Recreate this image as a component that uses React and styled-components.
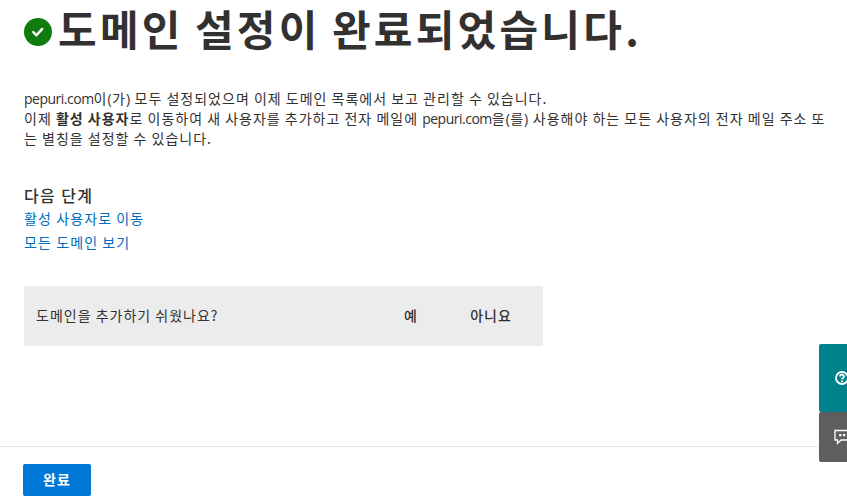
import styled, { createGlobalStyle } from "styled-components";

const Colors = {
  text: "#323130",
  link: "#006cbe",
  green: "#107c10",
  blue: "#0078d7",
  teal: "#00828c",
  gray: "#605e5c",
  panel: "#ececec",
  border: "#e5e5e5",
};

export default function App() {
  return (
    <>
      <GlobalStyle />
      <Page>
        <Content>
          <Header>
            <StatusIcon viewBox="0 0 28 28">
              <circle cx="14" cy="14" r="14" fill={Colors.green} />
              <path d="M9.3 14.2l3.2 3.1 5.7-6.4" />
            </StatusIcon>
            <Title>도메인 설정이 완료되었습니다.</Title>
          </Header>
          <Description>
            <Line>
              <Latin>pepuri.com</Latin>이<Paren>(</Paren>가<Paren>)</Paren> 모두 설정되었으며 이제 도메인 목록에서 보고 관리할 수 있습니다.
            </Line>
            <Line>
              이제 <b>활성 사용자</b>로 이동하여 새 사용자를 추가하고 전자 메일에{" "}
              <Latin>pepuri.com</Latin>을<Paren>(</Paren>를<Paren>)</Paren> 사용해야 하는 모든 사용자의 전자 메일 주소 또
            </Line>
            <Line>는 별칭을 설정할 수 있습니다.</Line>
          </Description>
          <NextSteps>
            <Subtitle>다음 단계</Subtitle>
            <StepLink href="#">활성 사용자로 이동</StepLink>
            <StepLink href="#">모든 도메인 보기</StepLink>
          </NextSteps>
          <Survey>
            <Question>도메인을 추가하기 쉬웠나요?</Question>
            <Answer $width={66}>예</Answer>
            <Answer $width={94}>아니요</Answer>
          </Survey>
        </Content>
        <Footer>
          <DoneButton>완료</DoneButton>
        </Footer>
        <SideButtons>
          <SideButton $color={Colors.teal} $height={68}>
            <svg width="15" height="14" viewBox="-1 0 15 14">
              <circle cx="7" cy="7" r="6" strokeWidth="1.8" />
              <path d="M5 5.6c0-2.6 4-2.6 4-.1 0 1.4-2 1.5-2 2.9M7 9.5v1.5" strokeWidth="1.8" />
            </svg>
          </SideButton>
          <SideButton $color={Colors.gray} $height={50}>
            <svg width="18" height="16" viewBox="0 0 18 16">
              <path d="M1 1.5h16v9.5H7l-3.5 3.5v-3.5H1z" strokeWidth="1.3" />
              <path d="M5.2 6.2h2.2M9 6.2h2.2M12.8 6.2h2.2" strokeWidth="2.3" />
            </svg>
          </SideButton>
        </SideButtons>
      </Page>
    </>
  );
}

const GlobalStyle = createGlobalStyle`
  * {
    box-sizing: border-box;
  }
  body {
    margin: 0;
    background: #fff;
    color: ${Colors.text};
    font-family: "Noto Sans CJK KR", sans-serif;
    font-size: 14px;
    letter-spacing: 1px;
  }
`;

const Page = styled.div`
  height: 503px;
  display: flex;
  flex-direction: column;
`;

const Content = styled.main`
  flex: 1;
  padding: 0 24px;
`;

const Header = styled.header`
  display: flex;
  align-items: center;
  gap: 6px;
  height: 64px;
`;

const StatusIcon = styled.svg`
  width: 28px;
  height: 28px;
  fill: none;

  path {
    stroke: #fff;
    stroke-width: 2.4;
    stroke-linecap: round;
    stroke-linejoin: round;
  }
`;

const Title = styled.h1`
  margin: 0;
  padding-bottom: 8px;
  font-size: 42px;
  line-height: 56px;
  font-weight: 700;
  letter-spacing: 3.25px;
  word-spacing: -1.5px;
  white-space: nowrap;
`;

const Description = styled.div`
  margin-top: 24px;
`;

const Line = styled.div`
  height: 20px;
  line-height: 20px;
  white-space: nowrap;
`;

const Latin = styled.span`
  font-family: "Open Sans", sans-serif;
  font-size: 14px;
  line-height: 1;
  letter-spacing: -0.5px;
`;

const Paren = styled(Latin)`
  letter-spacing: 0.4px;
`;

const NextSteps = styled.section`
  display: flex;
  flex-direction: column;
  align-items: flex-start;
  margin-top: 36px;
`;

const Subtitle = styled.h2`
  margin: 0;
  font-size: 16px;
  line-height: 22px;
  font-weight: 500;
  letter-spacing: 1.4px;
`;

const StepLink = styled.a`
  color: ${Colors.link};
  line-height: 24px;
  letter-spacing: 1.1px;
  text-decoration: none;
`;

const Survey = styled.div`
  display: flex;
  align-items: center;
  width: 519px;
  height: 60px;
  margin-top: 32px;
  padding: 0 5px 3px 12px;
  background: ${Colors.panel};
`;

const Question = styled.span`
  flex: 1;
`;

const Answer = styled.button`
  width: ${(props) => props.$width}px;
  padding: 0;
  border: 0;
  background: transparent;
  color: inherit;
  font: inherit;
  font-weight: 500;
  letter-spacing: inherit;
`;

const Footer = styled.footer`
  height: 57px;
  padding: 17px 23px;
  border-top: 1px solid ${Colors.border};
`;

const DoneButton = styled.button`
  display: block;
  width: 68px;
  height: 32px;
  padding: 0 0 2px;
  border: 0;
  border-radius: 2px;
  background: ${Colors.blue};
  color: #fff;
  font: inherit;
  font-weight: 700;
  letter-spacing: 1px;
`;

/* stays pinned to the right edge, over the page */
const SideButtons = styled.div`
  position: absolute;
  top: 344px;
  right: 0;
  width: 28px;
  overflow: hidden;
`;

const SideButton = styled.button`
  display: flex;
  align-items: center;
  width: 50px;
  height: ${(props) => props.$height}px;
  padding: 0 0 0 15px;
  border: 0;
  border-radius: 2px;
  background: ${(props) => props.$color};

  svg {
    flex: none;
    fill: none;
    stroke: #fff;
  }
`;
